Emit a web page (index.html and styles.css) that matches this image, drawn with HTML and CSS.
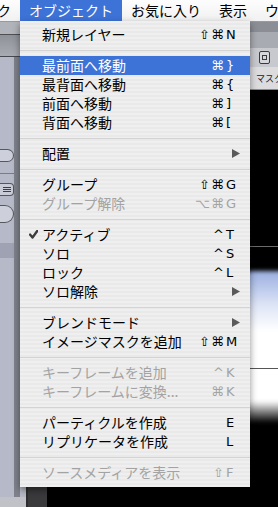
FILE: index.html
```html
<!DOCTYPE html>
<html lang="ja">
<head>
<meta charset="utf-8">
<link rel="stylesheet" href="styles.css">
</head>
<body>
<div class="menubar">
  <span class="title prev">マーク</span>
  <span class="title active">オブジェクト</span>
  <span class="title">お気に入り</span>
  <span class="title">表示</span>
  <span class="title">ウインドウ</span>
</div>
<div class="stage">
  <div class="side">
    <div class="side-top"></div>
    <div class="side-tool"></div>
    <div class="side-body">
      <div class="side-list">
        <div class="pill p1"></div>
        <div class="rule"></div>
        <div class="listbtn"><i></i><i></i><i></i></div>
        <div class="pill p2"></div>
        <div class="selrow"></div>
      </div>
      <div class="side-edge"></div>
    </div>
    <div class="side-foot"></div>
  </div>
  <div class="main">
    <div class="tb1"></div>
    <div class="tb2"></div>
    <div class="tb3">
      <span class="tool"><i></i></span>
      <span class="tool"><i></i></span>
    </div>
    <div class="tabs"><span>マスク</span></div>
    <div class="canvas">
      <div class="hline l1"></div>
      <div class="glow"></div>
      <div class="hline l2"></div>
    </div>
  </div>
</div>

<div class="menu">
  <div class="item"><span></span><span class="lbl">新規レイヤー</span><span class="mods">⇧⌘</span><span class="key">N</span></div>
  <div class="sep"></div>
  <div class="item sel"><span></span><span class="lbl">最前面へ移動</span><span class="mods">⌘</span><span class="key">}</span></div>
  <div class="item"><span></span><span class="lbl">最背面へ移動</span><span class="mods">⌘</span><span class="key">{</span></div>
  <div class="item"><span></span><span class="lbl">前面へ移動</span><span class="mods">⌘</span><span class="key">]</span></div>
  <div class="item"><span></span><span class="lbl">背面へ移動</span><span class="mods">⌘</span><span class="key">[</span></div>
  <div class="sep"></div>
  <div class="item"><span></span><span class="lbl">配置</span><span class="mods"></span><span class="key"><svg class="arrow" width="8" height="9" viewBox="0 0 8 9"><polygon points="0,0 8,4.5 0,9"/></svg></span></div>
  <div class="sep"></div>
  <div class="item"><span></span><span class="lbl">グループ</span><span class="mods">⇧⌘</span><span class="key">G</span></div>
  <div class="item dis"><span></span><span class="lbl">グループ解除</span><span class="mods">⌥⌘</span><span class="key">G</span></div>
  <div class="sep"></div>
  <div class="item"><span class="chk"><svg width="9" height="9" viewBox="0 0 9 9"><path d="M1 4.6 L3.5 7.6 L8.2 1"/></svg></span><span class="lbl">アクティブ</span><span class="mods">^</span><span class="key">T</span></div>
  <div class="item"><span></span><span class="lbl">ソロ</span><span class="mods">^</span><span class="key">S</span></div>
  <div class="item"><span></span><span class="lbl">ロック</span><span class="mods">^</span><span class="key">L</span></div>
  <div class="item"><span></span><span class="lbl">ソロ解除</span><span class="mods"></span><span class="key"><svg class="arrow" width="8" height="9" viewBox="0 0 8 9"><polygon points="0,0 8,4.5 0,9"/></svg></span></div>
  <div class="sep"></div>
  <div class="item"><span></span><span class="lbl">ブレンドモード</span><span class="mods"></span><span class="key"><svg class="arrow" width="8" height="9" viewBox="0 0 8 9"><polygon points="0,0 8,4.5 0,9"/></svg></span></div>
  <div class="item"><span></span><span class="lbl">イメージマスクを追加</span><span class="mods">⇧⌘</span><span class="key">M</span></div>
  <div class="sep"></div>
  <div class="item dis"><span></span><span class="lbl">キーフレームを追加</span><span class="mods">^</span><span class="key">K</span></div>
  <div class="item dis"><span></span><span class="lbl">キーフレームに変換...</span><span class="mods">⌘</span><span class="key">K</span></div>
  <div class="sep"></div>
  <div class="item"><span></span><span class="lbl">パーティクルを作成</span><span class="mods"></span><span class="key">E</span></div>
  <div class="item"><span></span><span class="lbl">リプリケータを作成</span><span class="mods"></span><span class="key">L</span></div>
  <div class="sep"></div>
  <div class="item dis"><span></span><span class="lbl">ソースメディアを表示</span><span class="mods">⇧</span><span class="key">F</span></div>
</div>
</body>
</html>
```
FILE: styles.css
```css
* { box-sizing: border-box; margin: 0; padding: 0; }
html, body { width: 278px; height: 507px; overflow: hidden; }
body {
  position: relative;
  background: #000;
  font-family: "Noto Sans CJK JP", "Noto Sans", sans-serif;
  font-size: 14px;
  color: #000;
}

/* menu bar */
.menubar {
  height: 21px;
  display: flex;
  white-space: nowrap;
  overflow: hidden;
  background: linear-gradient(#fdfdfd, #f1f1f1);
  box-shadow: 0 1px 0 #9a9a9a;
  position: relative;
  z-index: 1;
}
.title { padding: 0 9px; line-height: 21px; flex: none; }
.title.prev { margin-left: -40px; }
.title.active { background: #3d72d6; color: #fff; }

/* background app */
.stage { display: flex; height: 486px; }
.side {
  width: 28px;
  flex: none;
  display: flex;
  flex-direction: column;
  border-right: 2px solid #2c2c2e;
  background: #b7bac6;
}
.side-top { height: 14px; background: #b1b3ba; border-bottom: 1px solid #4d4f55; }
.side-tool { height: 22px; background: linear-gradient(#8f9199, #a9abb2); border-bottom: 1px solid #46484e; }
.side-body { flex: 1; display: flex; }
.side-list { width: 14px; background: #b5b9c8; display: flex; flex-direction: column; }
.side-edge { width: 6px; background: #7f828b; }
.side-foot { height: 10px; background: #c0c2c8; }
.pill { height: 13px; border: 1px solid #55575e; border-left: none; border-radius: 0 7px 7px 0; background: #cdd0da; }
.p1 { margin-top: 92px; }
.rule { height: 1px; background: #7a7c84; margin-top: 11px; }
.listbtn {
  height: 13px; margin-top: 9px;
  border: 1px solid #55575e; border-left: none; border-radius: 0 4px 4px 0;
  background: #c9ccd6;
  display: flex; flex-direction: column; justify-content: center; gap: 1px; padding: 0 2px 0 3px;
}
.listbtn i { display: block; height: 1px; background: #3d3f45; }
.p2 { margin-top: 9px; height: 18px; border-radius: 0 9px 9px 0; }
.selrow { height: 15px; margin-top: 20px; background: #9ea2b2; }

.main { flex: 1; display: flex; flex-direction: column; background: #000; }
.tb1 { height: 11px; background: #8c8e96; }
.tb2 { height: 16px; background: #a9abb2; }
.tb3 {
  height: 19px; background: #c8c9ce;
  display: flex; justify-content: flex-end; align-items: center; gap: 8px;
  margin-right: -6px;
}
.tool {
  width: 11px; height: 13px; border: 1px solid #3a3a3e; border-radius: 2px;
  display: flex; align-items: center; justify-content: center; background: #d6d7dc;
}
.tool i { width: 5px; height: 5px; border: 1px solid #3a3a3e; }
.tabs {
  height: 23px; background: #dcdcdf; border-bottom: 1px solid #8a8a8e;
  padding-left: 228px; font-size: 9px; line-height: 23px; color: #222; white-space: nowrap; overflow: hidden;
}
.canvas { flex: 1; position: relative; border-left: 19px solid #3a3a3c; background: #000; }
.hline { position: absolute; height: 1px; right: 0; }
.l1 { top: 156px; left: 160px; background: #6b6b6b; }
.glow {
  position: absolute; left: 198px; top: 181px; width: 60px; height: 152px;
  background: linear-gradient(#9aaee0 0, #dfe6f6 35px, #fff 60px, #fff 130px, rgba(255,255,255,0) 152px);
  border-radius: 6px;
  filter: blur(2px);
}
.l2 { top: 278px; left: 200px; background: #555; }

/* dropdown menu */
.menu {
  position: absolute;
  left: 20px;
  top: 21px;
  width: 230px;
  padding: 4px 0 5px;
  background: repeating-linear-gradient(#efefef 0, #efefef 2px, #e9e9e9 2px, #e9e9e9 4px);
  box-shadow: 0 3px 7px rgba(0, 0, 0, 0.45);
  z-index: 2;
}
.item {
  display: grid;
  grid-template-columns: 22px 1fr auto 24px;
  height: 19px;
  line-height: 19px;
  align-items: center;
  white-space: nowrap;
}
.item.sel { background: #3d72d6; color: #fff; }
.item.dis { color: #a3a3a3; }
.mods, .key { font-family: "DejaVu Sans", sans-serif; font-size: 13px; }
.mods { text-align: right; padding-right: 1px; letter-spacing: 1px; }
.arrow { display: block; margin-left: 6px; fill: #5a5a5a; }
.chk { display: flex; padding-left: 9px; }
.chk svg { fill: none; stroke: #3c3c3c; stroke-width: 2.4; stroke-linecap: round; stroke-linejoin: round; }
.sep { height: 12px; display: flex; align-items: center; }
.sep::after { content: ""; flex: 1; height: 1px; background: #d3d3d3; }
```
